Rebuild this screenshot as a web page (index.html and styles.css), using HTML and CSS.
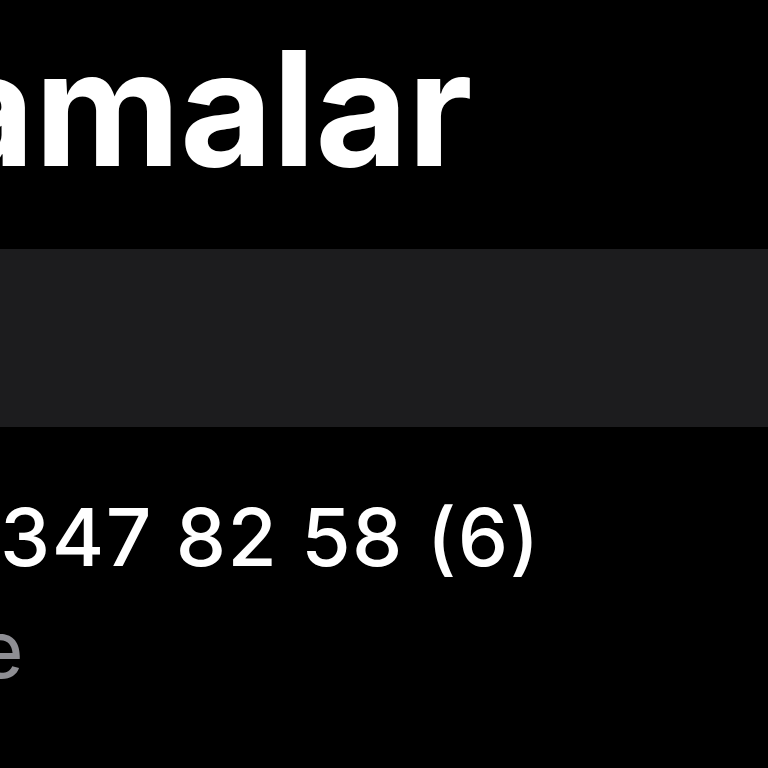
FILE: index.html
```html
<!DOCTYPE html>
<html lang="tr">
<head>
<meta charset="utf-8">
<link rel="stylesheet" href="styles.css">
</head>
<body>
<div class="screen">
  <h1 class="title">amalar</h1>
  <div class="search-band"></div>
  <div class="entry">
    <div class="number">347 82 58 (6)</div>
    <div class="label">e</div>
  </div>
</div>
</body>
</html>
```
FILE: styles.css
```css
html, body {
  margin: 0;
  padding: 0;
  background: #000;
}
.screen {
  width: 768px;
  height: 768px;
  overflow: hidden;
  background: #000;
  font-family: Inter, "Noto Sans", sans-serif;
  color: #fff;
}
.title {
  margin: 0 0 0 -58px;
  padding-top: 28px;
  height: 249px;
  box-sizing: border-box;
  font-size: 160px;
  line-height: 160px;
  font-weight: 700;
  letter-spacing: -0.5px;
  white-space: nowrap;
}
.search-band {
  height: 178px;
  background: #1c1c1e;
}
.entry {
  padding-top: 70px;
}
.number {
  font-size: 80px;
  line-height: 80px;
  font-weight: 500;
  letter-spacing: 1.5px;
  white-space: nowrap;
}
.label {
  margin-top: 32px;
  margin-left: -23px;
  font-size: 80px;
  line-height: 80px;
  color: #8e8e93;
}
```
